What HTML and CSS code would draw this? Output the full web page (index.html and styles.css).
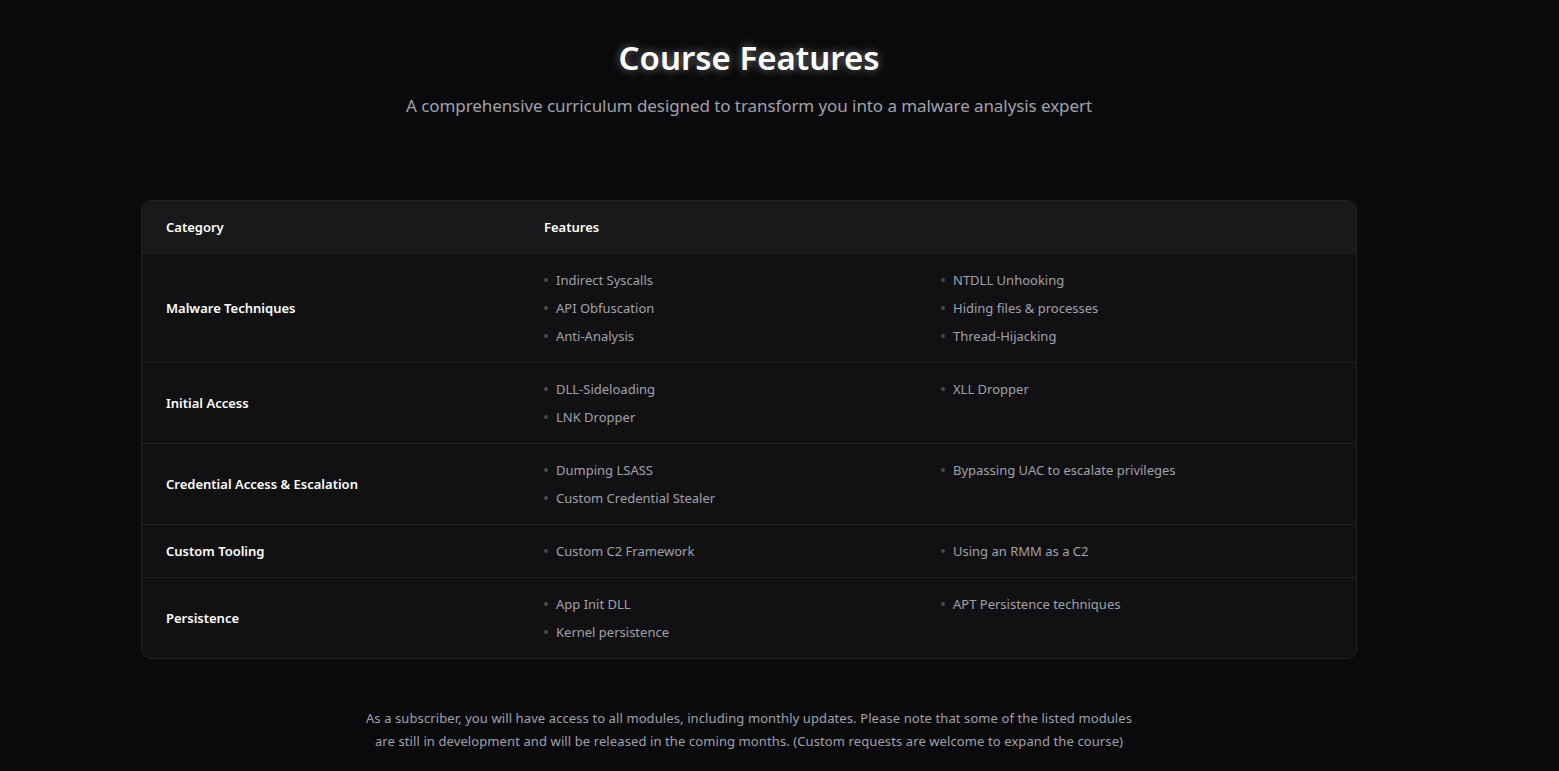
FILE: index.html
```html
<!DOCTYPE html>
<html lang="en">
<head>
    <meta charset="UTF-8">
    <meta name="viewport" content="width=device-width, initial-scale=1.0">
    <title>Course Features</title>
    <link rel="stylesheet" href="styles.css">
</head>
<body>
    <main class="page">
        <header class="intro">
            <h1>Course Features</h1>
            <p>A comprehensive curriculum designed to transform you into a malware analysis expert</p>
        </header>

        <div class="features-table">
            <div class="row head">
                <div class="cat">Category</div>
                <div class="feat">Features</div>
            </div>
            <div class="row">
                <div class="cat">Malware Techniques</div>
                <div class="feat">
                    <ul>
                        <li>Indirect Syscalls</li>
                        <li>API Obfuscation</li>
                        <li>Anti-Analysis</li>
                    </ul>
                    <ul>
                        <li>NTDLL Unhooking</li>
                        <li>Hiding files &amp; processes</li>
                        <li>Thread-Hijacking</li>
                    </ul>
                </div>
            </div>
            <div class="row">
                <div class="cat">Initial Access</div>
                <div class="feat">
                    <ul>
                        <li>DLL-Sideloading</li>
                        <li>LNK Dropper</li>
                    </ul>
                    <ul>
                        <li>XLL Dropper</li>
                    </ul>
                </div>
            </div>
            <div class="row">
                <div class="cat">Credential Access &amp; Escalation</div>
                <div class="feat">
                    <ul>
                        <li>Dumping LSASS</li>
                        <li>Custom Credential Stealer</li>
                    </ul>
                    <ul>
                        <li>Bypassing UAC to escalate privileges</li>
                    </ul>
                </div>
            </div>
            <div class="row">
                <div class="cat">Custom Tooling</div>
                <div class="feat">
                    <ul>
                        <li>Custom C2 Framework</li>
                    </ul>
                    <ul>
                        <li>Using an RMM as a C2</li>
                    </ul>
                </div>
            </div>
            <div class="row">
                <div class="cat">Persistence</div>
                <div class="feat">
                    <ul>
                        <li>App Init DLL</li>
                        <li>Kernel persistence</li>
                    </ul>
                    <ul>
                        <li>APT Persistence techniques</li>
                    </ul>
                </div>
            </div>
        </div>

        <p class="note">As a subscriber, you will have access to all modules, including monthly updates. Please note that some of the listed modules are still in development and will be released in the coming months. (Custom requests are welcome to expand the course)</p>
    </main>
</body>
</html>
```

FILE: styles.css
```css
body {
    margin: 0;
    background-color: #0a0a0c;
    color: #fff;
    font-family: "Noto Sans", "Open Sans", sans-serif;
}
.page {
    width: 1498px;
    padding-top: 36px;
    display: flex;
    flex-direction: column;
    align-items: center;
}
.intro {
    text-align: center;
}
.intro h1 {
    margin: 0;
    font-size: 33px;
    line-height: 44px;
    font-weight: 600;
    text-shadow: 0 0 10px rgba(255, 255, 255, 0.45);
}
.intro p {
    margin: 12px 0 0;
    font-size: 17px;
    line-height: 28px;
    letter-spacing: -0.08px;
    color: #a1a1aa;
}
.features-table {
    width: 1216px;
    box-sizing: border-box;
    margin-top: 80px;
    border: 1px solid #222225;
    border-radius: 10px;
    overflow: hidden;
    background-color: #111113;
}
.row {
    display: grid;
    grid-template-columns: 378px 1fr;
    border-top: 1px solid #202023;
}
.row:first-child {
    border-top: none;
}
.row.head {
    background-color: #19191b;
}
.cat, .feat {
    padding: 16px 24px;
    font-size: 13px;
    line-height: 20px;
}
.cat {
    display: flex;
    align-items: center;
    font-weight: 600;
    color: #fff;
}
.head .feat {
    font-weight: 600;
    color: #fff;
}
.feat {
    display: grid;
    grid-template-columns: 397px 1fr;
}
.feat ul {
    margin: 0;
    padding: 0;
    list-style: none;
    display: flex;
    flex-direction: column;
    gap: 8px;
}
.feat li {
    display: flex;
    align-items: center;
    color: #a1a1aa;
}
.feat li::before {
    content: "";
    width: 4px;
    height: 4px;
    border-radius: 50%;
    background-color: #4a4a50;
    margin-right: 8px;
}
.note {
    width: 768px;
    margin: 48px 0 0;
    text-align: center;
    font-size: 13px;
    line-height: 23px;
    letter-spacing: 0.1px;
    color: #a1a1aa;
}
```
